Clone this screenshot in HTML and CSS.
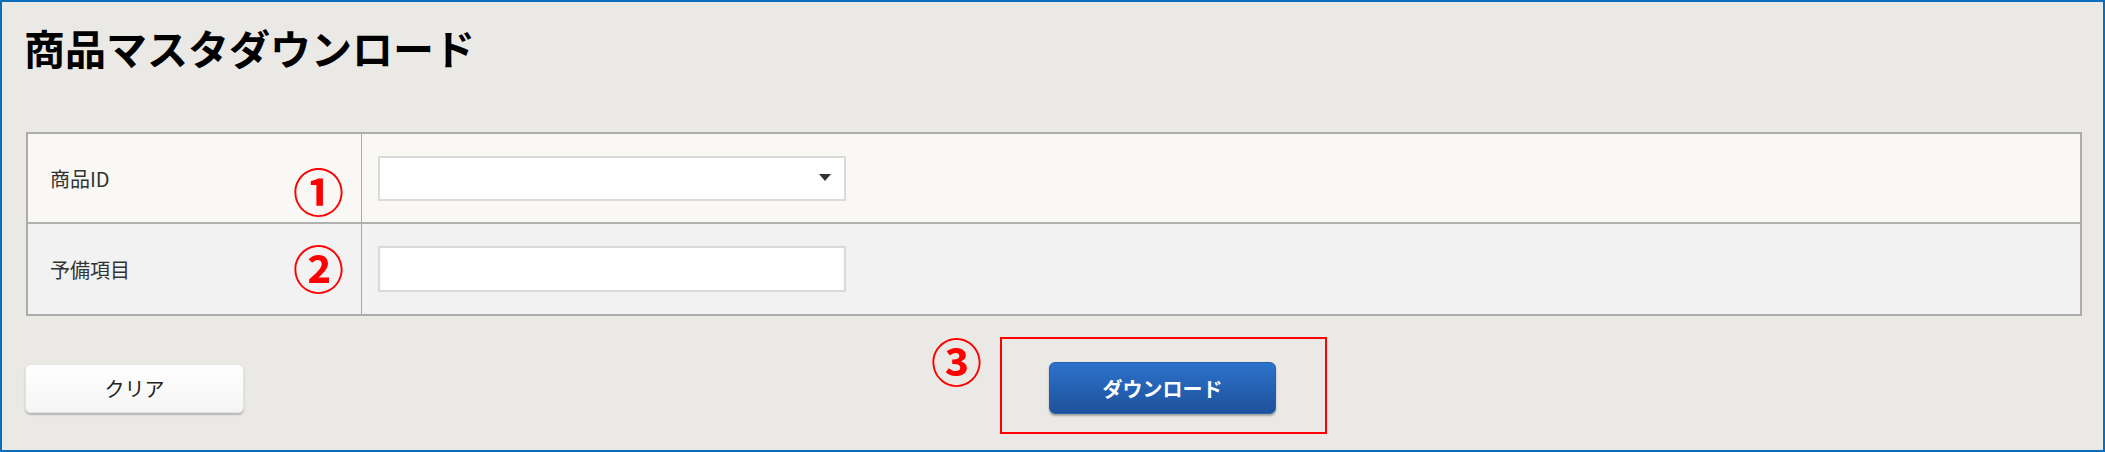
FILE: index.html
```html
<!DOCTYPE html>
<html lang="ja">
<head>
<meta charset="utf-8">
<link rel="stylesheet" href="styles.css">
</head>
<body>
<div class="frame">
  <h1 class="title">商品マスタダウンロード</h1>
  <div class="form">
    <div class="label-cell row-a">
      <span class="label">商品ID</span>
      <span class="mark mark-1">①</span>
    </div>
    <div class="field-cell row-a">
      <div class="select-wrap">
        <select class="select"><option></option></select>
      </div>
    </div>
    <div class="label-cell row-b last">
      <span class="label">予備項目</span>
      <span class="mark mark-2">②</span>
    </div>
    <div class="field-cell row-b last">
      <input class="input" type="text">
    </div>
  </div>
  <div class="actions">
    <button class="btn btn-clear">クリア</button>
    <span class="mark mark-3">③</span>
    <div class="highlight">
      <button class="btn btn-download">ダウンロード</button>
    </div>
  </div>
</div>
</body>
</html>
```

FILE: styles.css
```css
html, body {
  margin: 0;
  padding: 0;
}
body {
  font-family: "Noto Sans CJK JP", "Noto Sans", sans-serif;
  background: #ebe9e5;
}
.frame {
  width: 2105px;
  height: 452px;
  box-sizing: border-box;
  border: 2px solid #0a6ebd;
  background: #ebe9e5;
  overflow: hidden;
}
.title {
  margin: 0;
  padding: 21px 0 0 22px;
  height: 130px;
  box-sizing: border-box;
  font-size: 41px;
  line-height: 48px;
  font-weight: 700;
  color: #000;
}
.form {
  margin-left: 24px;
  width: 2056px;
  box-sizing: border-box;
  border: 2px solid #acacac;
  display: grid;
  grid-template-columns: 334px 1fr;
  grid-template-rows: 90px 90px;
}
.label-cell {
  border-right: 1px solid #a9a9a9;
  border-bottom: 2px solid #b0b0b0;
  display: flex;
  align-items: center;
  justify-content: space-between;
  padding: 0 17px 0 22px;
  box-sizing: border-box;
}
.field-cell {
  border-bottom: 2px solid #b0b0b0;
  display: flex;
  align-items: center;
  padding-left: 16px;
  box-sizing: border-box;
}
.last {
  border-bottom: none;
}
.row-a {
  background: #f9f8f4;
}
.row-b {
  background: #f2f2f2;
}
.label {
  font-size: 20px;
  color: #333;
}
.mark {
  color: #f00;
  font-family: "Noto Sans CJK JP", sans-serif;
  font-size: 51px;
  line-height: 51px;
  font-weight: 700;
  display: inline-block;
}
.mark-1 {
  margin-top: 24px;
}
.mark-2 {
  margin-top: -4px;
}
.select-wrap {
  position: relative;
  width: 468px;
  height: 45px;
}
.select {
  appearance: none;
  -webkit-appearance: none;
  width: 100%;
  height: 100%;
  box-sizing: border-box;
  border: 2px solid #dadada;
  border-radius: 0;
  background: #fff;
  margin: 0;
}
.select-wrap::after {
  content: "";
  position: absolute;
  right: 15px;
  top: 18px;
  border-left: 6px solid transparent;
  border-right: 6px solid transparent;
  border-top: 7px solid #333;
}
.input {
  width: 468px;
  height: 46px;
  box-sizing: border-box;
  border: 2px solid #dadada;
  border-radius: 0;
  background: #fff;
  margin: 0;
  padding: 0;
}
.actions {
  display: flex;
  align-items: flex-start;
  margin-top: 21px;
  padding-left: 23px;
}
.btn {
  font-family: "Noto Sans CJK JP", sans-serif;
  cursor: pointer;
  margin: 0;
  padding: 0;
}
.btn-clear {
  width: 219px;
  height: 49px;
  margin-top: 27px;
  border: 1px solid #e4e4e4;
  border-radius: 6px;
  background: linear-gradient(#ffffff, #f5f5f5);
  box-shadow: 0 2px 2px rgba(0, 0, 0, 0.22);
  font-size: 20px;
  color: #222;
}
.mark-3 {
  margin-left: 687px;
  margin-top: -2px;
}
.highlight {
  margin-left: 18px;
  border: 2px solid #f00;
  width: 327px;
  height: 97px;
  box-sizing: border-box;
  padding: 23px 0 0 47px;
}
.btn-download {
  width: 227px;
  height: 52px;
  border: 1px solid #2360ad;
  border-radius: 6px;
  background: linear-gradient(#2c72cc, #1e529b);
  box-shadow: 0 2px 2px rgba(0, 0, 0, 0.3);
  color: #fff;
  font-size: 20px;
  font-weight: 700;
}
```
